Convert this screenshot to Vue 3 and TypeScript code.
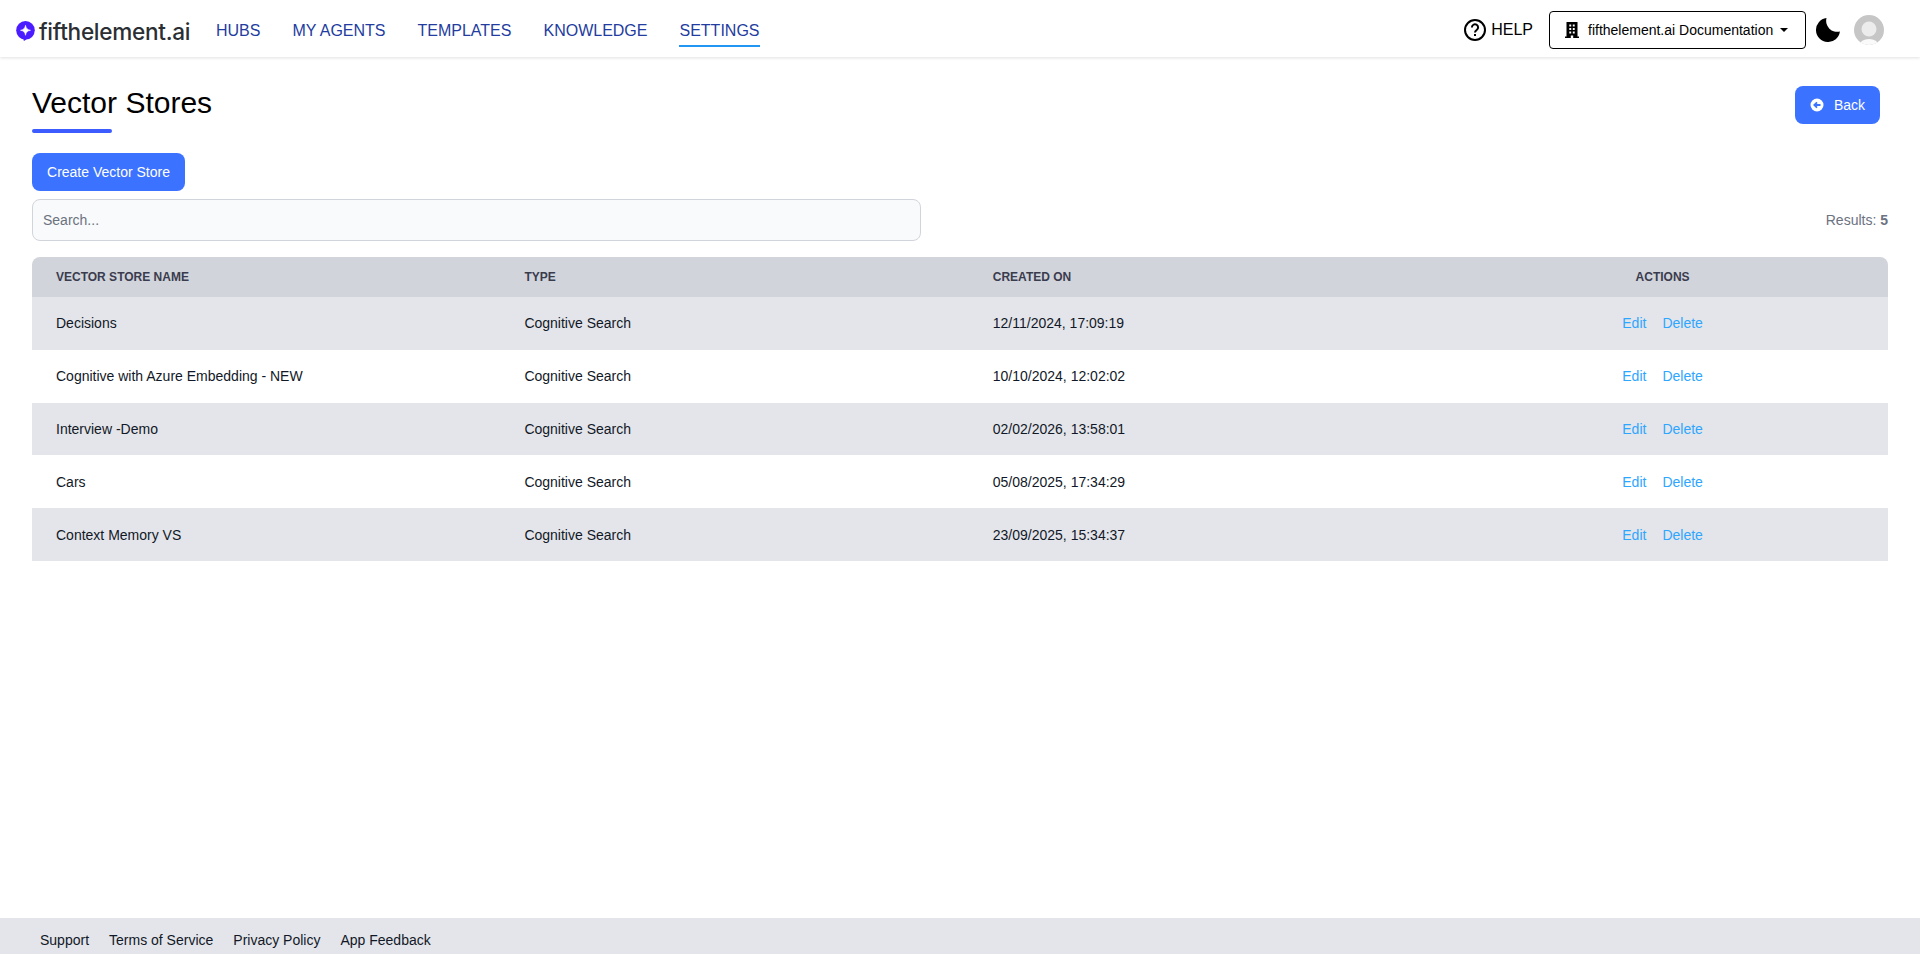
<template>
	<div class="page">
		<header class="topbar">
			<div class="logo">
				<svg class="logo-mark" viewBox="0 0 19 20" width="19" height="20">
					<circle cx="9.500" cy="9.300" r="9.300" fill="#4a1cff" />
					<path d="M5.500 16h8l-4.700 3.600c-.7.500-1.300.2-1.300-.6v-1.500z" fill="#4a1cff" />
					<path d="M9.500 4.300c.5 3 1.900 4.500 5 5-3.100.5-4.500 2-5 5-.5-3-1.900-4.500-5-5 3.100-.5 4.500-2 5-5z" fill="#fff" stroke="#fff" stroke-width=".6" stroke-linejoin="round" />
				</svg>
				<span class="logo-text">fifthelement.ai</span>
			</div>
			<nav class="nav">
				<a v-for="item in navItems" :key="item" class="nav-link" :class="{ active: item === 'SETTINGS' }">{{ item }}</a>
			</nav>
			<div class="top-right">
				<a class="help">
					<svg viewBox="0 0 24 24" width="24" height="24">
						<circle cx="12" cy="12" r="10" fill="none" stroke="#000" stroke-width="2" />
						<path d="M8.900 9.400a3.100 3.100 0 1 1 4.800 2.600c-1.100.8-1.700 1.300-1.700 2.600" fill="none" stroke="#000" stroke-width="2" />
						<rect x="11" y="16" width="2" height="2" />
					</svg>
					<span>HELP</span>
				</a>
				<button class="org-btn">
					<svg viewBox="0 0 14 16" width="14" height="16">
						<path fill-rule="evenodd" d="M1.500 0h11v14.500H14V16H8.200v-2.600H5.800V16H0v-1.500h1.500zM4.300 2.500v1.900h1.900V2.500zm3.500 0v1.900h1.900V2.500zM4.300 6v1.900h1.900V6zm3.500 0v1.900h1.900V6zM4.300 9.500v1.900h1.900V9.500zm3.500 0v1.900h1.900V9.500z" />
					</svg>
					<span>fifthelement.ai Documentation</span>
					<i class="caret"></i>
				</button>
				<svg class="moon" viewBox="0 0 24 24" width="24" height="24">
					<path d="M10.500 .1A12 12 0 1 0 23.900 13.500 11 11 0 0 1 10.500 .1z" />
				</svg>
				<svg class="avatar" viewBox="0 0 30 30" width="30" height="30">
					<defs>
						<clipPath id="avatar-clip"><circle cx="15" cy="15" r="15" /></clipPath>
					</defs>
					<g clip-path="url(#avatar-clip)">
						<rect width="30" height="30" fill="#c6c6c6" />
						<circle cx="15" cy="14" r="7.500" fill="#ececec" />
						<ellipse cx="15" cy="30" rx="9.500" ry="6" fill="#fafafa" />
					</g>
				</svg>
			</div>
		</header>

		<main class="content">
			<div class="title-row">
				<div>
					<h1 class="title">Vector Stores</h1>
					<div class="title-bar"></div>
				</div>
				<button class="btn back-btn">
					<svg viewBox="0 0 14 14" width="14" height="14">
						<circle cx="7" cy="7" r="6.500" fill="#fff" />
						<path d="M10.500 7H4.500M7 4.300 4.300 7 7 9.700" fill="none" stroke="#3b72ff" stroke-width="1.800" />
					</svg>
					<span>Back</span>
				</button>
			</div>
			<button class="btn create-btn">Create Vector Store</button>
			<div class="search-row">
				<input v-model="search" class="search" type="text" placeholder="Search..." />
				<div class="results">Results: <b>{{ stores.length }}</b></div>
			</div>
			<table class="table">
				<colgroup>
					<col class="col-main" />
					<col class="col-main" />
					<col class="col-main" />
					<col />
				</colgroup>
				<thead>
					<tr>
						<th>Vector Store Name</th>
						<th>Type</th>
						<th>Created On</th>
						<th class="center">Actions</th>
					</tr>
				</thead>
				<tbody>
					<tr v-for="store in stores" :key="store.name">
						<td>{{ store.name }}</td>
						<td>{{ store.type }}</td>
						<td>{{ store.created }}</td>
						<td class="center">
							<a class="action">Edit</a>
							<a class="action">Delete</a>
						</td>
					</tr>
				</tbody>
			</table>
		</main>

		<footer class="footer">
			<a v-for="link in footerLinks" :key="link">{{ link }}</a>
		</footer>
	</div>
</template>

<script setup lang="ts">
import { ref } from 'vue';

interface VectorStore {
	name: string;
	type: string;
	created: string;
}

const search = ref('');
const navItems: string[] = ['HUBS', 'MY AGENTS', 'TEMPLATES', 'KNOWLEDGE', 'SETTINGS'];
const footerLinks: string[] = ['Support', 'Terms of Service', 'Privacy Policy', 'App Feedback'];

const stores: VectorStore[] = [
	{ name: 'Decisions', type: 'Cognitive Search', created: '12/11/2024, 17:09:19' },
	{ name: 'Cognitive with Azure Embedding - NEW', type: 'Cognitive Search', created: '10/10/2024, 12:02:02' },
	{ name: 'Interview -Demo', type: 'Cognitive Search', created: '02/02/2026, 13:58:01' },
	{ name: 'Cars', type: 'Cognitive Search', created: '05/08/2025, 17:34:29' },
	{ name: 'Context Memory VS', type: 'Cognitive Search', created: '23/09/2025, 15:34:37' },
];
</script>

<style>
html,
body {
	margin: 0;
	background: #fff;
}
</style>

<style scoped>
.page {
	min-height: 954px;
	display: flex;
	flex-direction: column;
	font-family: "Liberation Sans", Arial, sans-serif;
	color: #000;
}

/* top bar */
.topbar {
	height: 57px;
	box-sizing: border-box;
	display: flex;
	align-items: center;
	padding: 0 36px 0 16px;
	box-shadow: 0 1px 3px rgba(0, 0, 0, 0.12);
}

.logo {
	display: flex;
	align-items: center;
	gap: 4px;
	width: 200px;
	padding-top: 5px;
}

.logo-text {
	font-family: Inter, sans-serif;
	font-size: 22.6px;
	font-weight: 500;
	color: #2b2f33;
	letter-spacing: -0.3px;
}

.nav {
	display: flex;
	gap: 32px;
}

.nav-link {
	font-size: 16px;
	line-height: 24px;
	color: #233c9f;
	padding-bottom: 2px;
	border-bottom: 2px solid transparent;
	margin-top: 9px;
}

.nav-link.active {
	border-bottom-color: #2196f3;
}

.top-right {
	margin-left: auto;
	padding-top: 3px;
	display: flex;
	align-items: center;
}

.help {
	display: flex;
	align-items: center;
	gap: 4px;
	font-size: 16px;
}

.org-btn {
	margin-left: 16px;
	width: 257px;
	height: 38px;
	box-sizing: border-box;
	display: flex;
	align-items: center;
	padding: 0 0 0 15px;
	background: #fff;
	border: 1px solid #000;
	border-radius: 4px;
	font: 14px "Liberation Sans", Arial, sans-serif;
	color: #000;
}

.org-btn span {
	margin-left: 9px;
}

.caret {
	margin-left: 7px;
	width: 0;
	height: 0;
	border-left: 4.5px solid transparent;
	border-right: 4.5px solid transparent;
	border-top: 4.5px solid #000;
}

.moon {
	margin-left: 10px;
}

.avatar {
	margin-left: 14px;
}

/* main */
.content {
	flex: 1;
	padding: 0 32px;
}

.title-row {
	display: flex;
	justify-content: space-between;
	align-items: flex-start;
	padding-top: 28px;
	padding-right: 8px;
}

.title {
	margin: 0;
	font-size: 30px;
	font-weight: 400;
	line-height: 36px;
}

.title-bar {
	width: 80px;
	height: 4px;
	margin-top: 8px;
	background: #3d5cff;
	border-radius: 2px;
}

.btn {
	height: 38px;
	border: none;
	border-radius: 8px;
	background: #3b72ff;
	color: #fff;
	font: 14px "Liberation Sans", Arial, sans-serif;
}

.back-btn {
	width: 85px;
	margin-top: 1px;
	display: flex;
	align-items: center;
	justify-content: center;
	gap: 10px;
}

.create-btn {
	display: block;
	width: 153px;
	margin-top: 20px;
}

.search-row {
	display: flex;
	align-items: center;
	justify-content: space-between;
	margin-top: 8px;
}

.search {
	width: 889px;
	height: 42px;
	box-sizing: border-box;
	padding: 0 10px;
	background: #f9fafb;
	border: 1px solid #d1d5db;
	border-radius: 8px;
	font: 14px "Liberation Sans", Arial, sans-serif;
	outline: none;
}

.search::placeholder {
	color: #6b7280;
	opacity: 1;
}

.results {
	font-size: 14px;
	color: #6b7280;
}

.table {
	width: 100%;
	margin-top: 16px;
	table-layout: fixed;
	border-collapse: separate;
	border-spacing: 0;
	font-size: 14px;
}

.col-main {
	width: 468.4px;
}

th {
	height: 40px;
	padding: 0 24px;
	text-align: left;
	font-size: 12px;
	font-weight: 700;
	text-transform: uppercase;
	color: #3a3c4e;
	background: #d1d4db;
}

th:first-child {
	border-top-left-radius: 8px;
}

th:last-child {
	border-top-right-radius: 8px;
}

td {
	height: 52.8px;
	box-sizing: border-box;
	padding: 0 24px;
	color: #111827;
}

tbody tr:nth-child(odd) td {
	background: #e4e5ea;
}

.center {
	text-align: center;
}

.action {
	color: #2ea6ff;
}

.action + .action {
	margin-left: 16px;
}

/* footer */
.footer {
	height: 36px;
	box-sizing: border-box;
	display: flex;
	align-items: center;
	gap: 20px;
	padding: 7px 40px 0;
	background: #e4e5ea;
	font-size: 14px;
	color: #111827;
}
</style>
